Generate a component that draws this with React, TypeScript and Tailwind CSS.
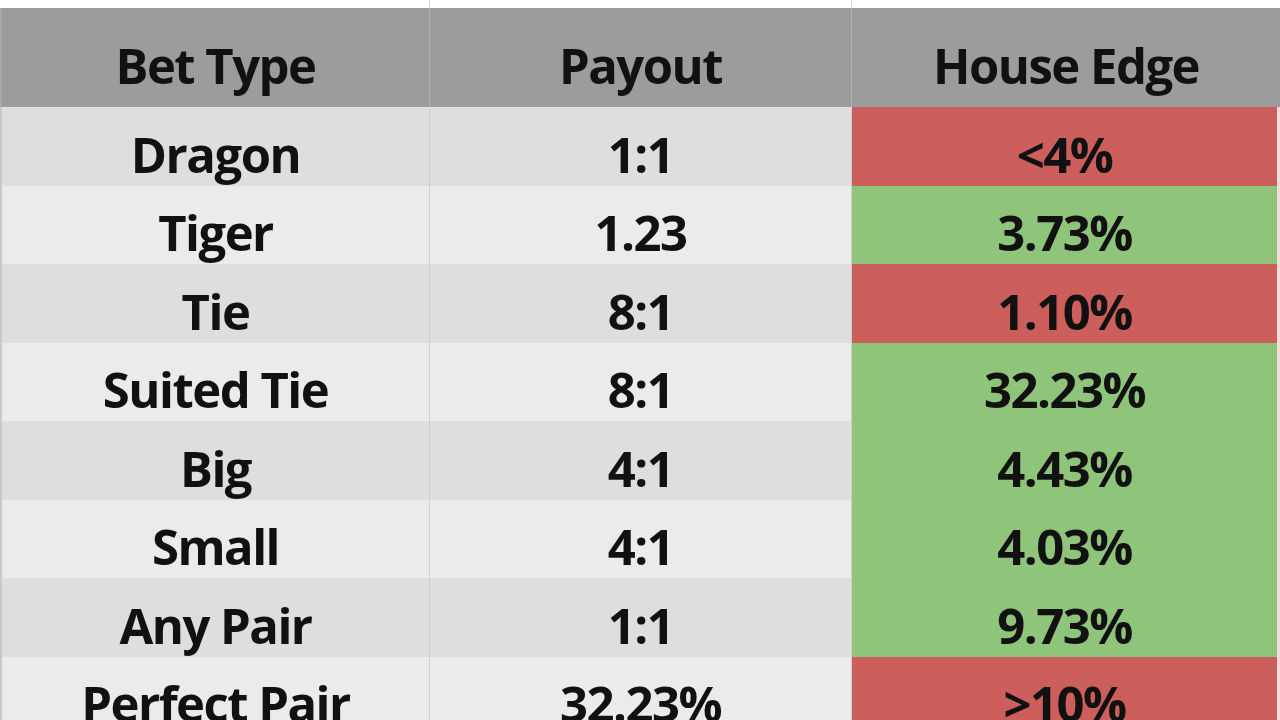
import React from "react";

type Row = { bet: string; payout: string; edge: string; good: boolean };

const rows: Row[] = [
  { bet: "Dragon", payout: "1:1", edge: "<4%", good: false },
  { bet: "Tiger", payout: "1.23", edge: "3.73%", good: true },
  { bet: "Tie", payout: "8:1", edge: "1.10%", good: false },
  { bet: "Suited Tie", payout: "8:1", edge: "32.23%", good: true },
  { bet: "Big", payout: "4:1", edge: "4.43%", good: true },
  { bet: "Small", payout: "4:1", edge: "4.03%", good: true },
  { bet: "Any Pair", payout: "1:1", edge: "9.73%", good: true },
  { bet: "Perfect Pair", payout: "32.23%", edge: ">10%", good: false },
];

export default function App() {
  return (
    <div
      className="w-[1280px] h-[720px] overflow-hidden bg-white text-[#111111]"
      style={{ fontFamily: '"Open Sans", "Noto Sans", sans-serif' }}
    >
      <div className="grid grid-cols-[430px_422px_428px] h-[8px]">
        <div className="border-r border-[#d6d6d6]" />
        <div className="border-r border-[#d6d6d6]" />
        <div />
      </div>
      <div className="grid grid-cols-[430px_422px_428px] h-[99px] bg-[#9c9c9c] text-[49px] font-bold tracking-[-1.5px] leading-none">
        <div className="flex items-center justify-center pt-[16px] border-r border-[#b2b2b2] border-l-2 border-l-[#a8a8a8]">Bet Type</div>
        <div className="flex items-center justify-center pt-[16px] border-r border-[#b2b2b2]">Payout</div>
        <div className="flex items-center justify-center pt-[16px]">House Edge</div>
      </div>
      {rows.map((r, i) => {
        const dark = i % 2 === 0;
        return (
          <div
            key={r.bet}
            className={`grid grid-cols-[430px_422px_428px] h-[78.5px] text-[49px] font-bold tracking-[-1.5px] leading-none ${
              dark ? "bg-[#dedede]" : "bg-[#ebebeb]"
            }`}
          >
            <div className="flex items-center justify-center pt-[16px] border-r border-[#cfcfcf] border-l-2 border-l-[#c9c9c9]">
              {r.bet}
            </div>
            <div className="flex items-center justify-center pt-[16px] border-r border-[#cfcfcf]">
              {r.payout}
            </div>
            <div
              className={`flex items-center justify-center pt-[16px] border-r-[3px] border-r-[#f4dcdc] ${
                r.good ? "bg-[#8fc57a]" : "bg-[#cc5f5c]"
              }`}
            >
              {r.edge}
            </div>
          </div>
        );
      })}
    </div>
  );
}
